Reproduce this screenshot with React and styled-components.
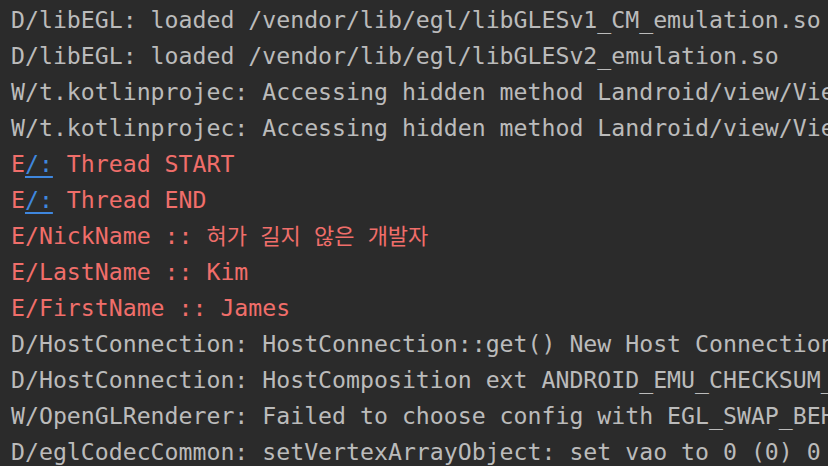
import styled, { createGlobalStyle } from "styled-components";

const GlobalStyle = createGlobalStyle`
	html, body {
		margin: 0;
		padding: 0;
		background-color: #2b2b2b;
	}
`;

const Console = styled.div`
	width: 828px;
	height: 466px;
	overflow: hidden;
	box-sizing: border-box;
	padding: 2px 0 0 11px;
	background-color: #2b2b2b;
	font-family: "DejaVu Sans Mono", "Noto Sans CJK KR", monospace;
	font-size: 23.2px;
`;

const Line = styled.div`
	height: 36px;
	line-height: 36px;
	white-space: pre;
	color: ${(p) => (p.$level === "E" ? "#f06e6a" : "#bbbbbb")};
`;

const Link = styled.span`
	color: #3f87de;
	text-decoration: underline;
	text-decoration-thickness: 2px;
	text-underline-offset: 4px;
`;

const Hangul = styled.span`
	font-family: "DejaVu Sans Mono", "Noto Sans CJK KR", sans-serif;
	font-size: 22px;
`;

const logs = [
	{ level: "D", text: "D/libEGL: loaded /vendor/lib/egl/libGLESv1_CM_emulation.so" },
	{ level: "D", text: "D/libEGL: loaded /vendor/lib/egl/libGLESv2_emulation.so" },
	{ level: "W", text: "W/t.kotlinprojec: Accessing hidden method Landroid/view/View;->computeFitSystemWindows" },
	{ level: "W", text: "W/t.kotlinprojec: Accessing hidden method Landroid/view/ViewGroup;->makeOptionalFitsSystemWindows" },
	{ level: "E", link: true, text: " Thread START" },
	{ level: "E", link: true, text: " Thread END" },
	{ level: "E", text: "E/NickName :: ", korean: "혀가 길지 않은 개발자" },
	{ level: "E", text: "E/LastName :: Kim" },
	{ level: "E", text: "E/FirstName :: James" },
	{ level: "D", text: "D/HostConnection: HostConnection::get() New Host Connection established" },
	{ level: "D", text: "D/HostConnection: HostComposition ext ANDROID_EMU_CHECKSUM_HELPER_v1" },
	{ level: "W", text: "W/OpenGLRenderer: Failed to choose config with EGL_SWAP_BEHAVIOR_PRESERVED" },
	{ level: "D", text: "D/eglCodecCommon: setVertexArrayObject: set vao to 0 (0) 0 0" },
];

export default function App() {
	return (
		<>
			<GlobalStyle />
			<Console>
				{logs.map((log, i) => (
					<Line key={i} $level={log.level}>
						{log.link ? (
							<>
								E<Link>/:</Link>
							</>
						) : null}
						{log.text}
						{log.korean ? <Hangul>{log.korean}</Hangul> : null}
					</Line>
				))}
			</Console>
		</>
	);
}
